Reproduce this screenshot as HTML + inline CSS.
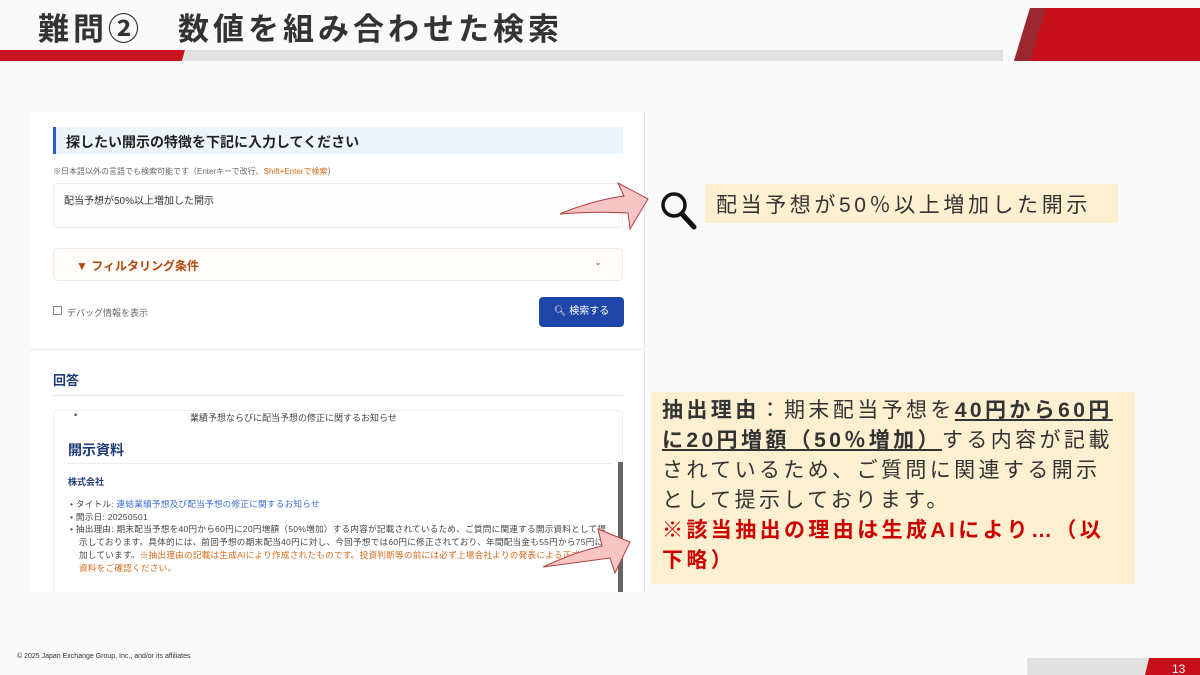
<!DOCTYPE html>
<html><head><meta charset="utf-8">
<style>
*{margin:0;padding:0;box-sizing:border-box}
body{width:1200px;height:675px;background:#fafafa;position:relative;overflow:hidden;font-family:"Liberation Sans","Noto Sans CJK JP",sans-serif;color:#333}
.a{position:absolute}
</style></head><body>
<div class="a" style="left:38px;top:4px;font-size:31px;font-weight:bold;color:#333;letter-spacing:4px;white-space:nowrap">難問②　数値を組み合わせた検索</div>
<svg class="a" style="left:0;top:0" width="1200" height="675">
<polygon points="0,50 185,50 182,61 0,61" fill="#c8141e"/>
<polygon points="186,50 1003,50 1003,61 183,61" fill="#e1e1e1"/>
<polygon points="1030,8 1200,8 1200,61 1014,61" fill="#c8101a"/>
<polygon points="1030,8 1046,8 1030,61 1014,61" fill="#9b2830"/>
<rect x="1027" y="658" width="120" height="17" fill="#e1e1e1"/>
<polygon points="1149,658 1200,658 1200,675 1145,675" fill="#c8101a"/>
<text x="1172" y="673" font-size="12" fill="#fff" font-family="Liberation Sans">13</text>
</svg>
<div class="a" style="left:17px;top:653px;font-size:7px;color:#333">© 2025 Japan Exchange Group, Inc., and/or its affiliates</div>

<div class="a" style="left:30px;top:112px;width:615px;height:480px;background:#fff;border-right:1px solid #e6e6e6"></div>
<div class="a" style="left:30px;top:348px;width:615px;height:3px;background:#f6f6f6"></div>
<div class="a" style="left:53px;top:127px;width:570px;height:27px;background:#eef4fc;border-left:3px solid #2a5cc8;font-size:14px;font-weight:bold;color:#222;padding:5px 0 0 10px">探したい開示の特徴を下記に入力してください</div>
<div class="a" style="left:53px;top:166px;font-size:8px;color:#666">※日本語以外の言語でも検索可能です（Enterキーで改行、<span style="color:#d86a1a">Shift+Enterで検索</span>）</div>
<div class="a" style="left:53px;top:183px;width:570px;height:45px;background:#fffcfd;border:1px solid #eee;border-radius:4px;font-size:10px;color:#333;padding:8px 10px">配当予想が50%以上増加した開示</div>
<div class="a" style="left:53px;top:248px;width:570px;height:33px;background:#fffcfa;border:1px solid #f2ebe4;border-radius:5px;font-size:12px;font-weight:bold;color:#b04a10;padding:8px 0 0 22px">▼ フィルタリング条件<span style="position:absolute;right:20px;top:8px;font-size:9px;color:#d08050">⌄</span></div>
<div class="a" style="left:53px;top:306px;width:9px;height:9px;border:1px solid #888"></div>
<div class="a" style="left:67px;top:306px;font-size:9px;color:#666">デバッグ情報を表示</div>
<div class="a" style="left:539px;top:297px;width:85px;height:30px;background:#1e45a8;border-radius:4px;color:#fff;font-size:10px;text-align:center;line-height:30px">🔍︎ 検索する</div>
<div class="a" style="left:53px;top:370px;font-size:13px;font-weight:bold;color:#1e3a78">回答</div>
<div class="a" style="left:53px;top:395px;width:570px;height:1px;background:#e6e6e6"></div>
<div class="a" style="left:53px;top:410px;width:570px;height:182px;border:1px solid #eee;border-bottom:none;border-radius:4px 4px 0 0"></div>
<div class="a" style="left:74px;top:410px;font-size:9px;color:#444">•</div>
<div class="a" style="left:190px;top:411px;font-size:9px;color:#444">業績予想ならびに配当予想の修正に関するお知らせ</div>
<div class="a" style="left:68px;top:440px;font-size:14px;font-weight:bold;color:#1e3a78">開示資料</div>
<div class="a" style="left:68px;top:463px;width:545px;height:1px;background:#eee"></div>
<div class="a" style="left:68px;top:475px;font-size:9px;font-weight:bold;color:#1e3a78">株式会社</div>
<div class="a" style="left:70px;top:498px;font-size:8.6px;color:#444;line-height:12.7px;width:545px;letter-spacing:0.25px">
• タイトル: <span style="color:#3a6ed0">連結業績予想及び配当予想の修正に関するお知らせ</span><br>• 開示日: 20250501<br>
<div style="padding-left:9px;text-indent:-9px">• 抽出理由: 期末配当予想を40円から60円に20円増額（50%増加）する内容が記載されているため、ご質問に関連する開示資料として提示しております。具体的には、前回予想の期末配当40円に対し、今回予想では60円に修正されており、年間配当金も55円から75円に増加しています。<span style="color:#d86a1a">※抽出理由の記載は生成AIにより作成されたものです。投資判断等の前には必ず上場会社よりの発表による正式な開示資料をご確認ください。</span></div></div>
<div class="a" style="left:618px;top:462px;width:5px;height:130px;background:#666"></div>
<div class="a" style="left:0;top:592px;width:650px;height:20px;background:#fafafa"></div>

<svg class="a" style="left:0;top:0" width="1200" height="675">
<path d="M560,214 Q590,201 624,196 L618,183 L648,199 L630,229 L628,213 Q595,211 560,214 Z" fill="#f9c4c4" stroke="#b04040" stroke-width="1"/>
<path d="M543,567 Q575,552 602,546 L598,529 L630,542 L615,573 L610,558 Q580,562 543,567 Z" fill="#f9c4c4" stroke="#b04040" stroke-width="1"/>
<circle cx="674" cy="205" r="11" fill="none" stroke="#111" stroke-width="3.5"/>
<line x1="682" y1="214" x2="694" y2="227" stroke="#111" stroke-width="5" stroke-linecap="round"/>
</svg>
<div class="a" style="left:705px;top:184px;width:413px;height:39px;background:#fdf0d0;font-size:21px;color:#333;padding:5px 0 0 11px;white-space:nowrap;letter-spacing:3.6px">配当予想が50％以上増加した開示</div>
<div class="a" style="left:651px;top:392px;width:484px;height:192px;background:#fdf0d0;font-size:21px;color:#333;padding:4px 0 0 11px;line-height:30px;letter-spacing:3.4px;white-space:nowrap">
<b>抽出理由</b>：期末配当予想を<b style="text-decoration:underline">40円から60円<br>に20円増額（50％増加）</b>する内容が記載<br>されているため、ご質問に関連する開示<br>として提示しております。<br><b style="color:#c00">※該当抽出の理由は生成AIにより…（以<br>下略）</b></div>
</body></html>
